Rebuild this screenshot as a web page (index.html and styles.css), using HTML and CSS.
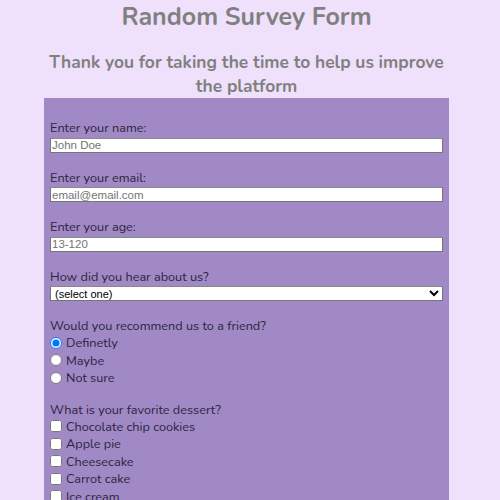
FILE: index.html
```html
<!DOCTYPE html>
<html>
<head>
<meta charset="utf-8">
<link rel="stylesheet" href="styles.css">
</head>
<body>
<h1 class="title">Random Survey Form</h1>
<h2 class="subtitle">Thank you for taking the time to help us improve the platform</h2>
<form class="survey">
  <div class="group">
    <label class="lbl" for="name">Enter your name:</label>
    <input class="field" id="name" type="text" placeholder="John Doe">
  </div>
  <div class="group">
    <label class="lbl" for="email">Enter your email:</label>
    <input class="field" id="email" type="email" placeholder="email@email.com">
  </div>
  <div class="group">
    <label class="lbl" for="age">Enter your age:</label>
    <input class="field" id="age" type="text" placeholder="13-120">
  </div>
  <div class="group">
    <label class="lbl" for="hear">How did you hear about us?</label>
    <select class="field select" id="hear"><option>(select one)</option></select>
  </div>
  <div class="group">
    <p class="lbl">Would you recommend us to a friend?</p>
    <label class="opt"><input class="box" type="radio" name="rec" checked> Definetly</label>
    <label class="opt"><input class="box" type="radio" name="rec"> Maybe</label>
    <label class="opt"><input class="box" type="radio" name="rec"> Not sure</label>
  </div>
  <div class="group">
    <p class="lbl">What is your favorite dessert?</p>
    <label class="opt"><input class="box" type="checkbox"> Chocolate chip cookies</label>
    <label class="opt"><input class="box" type="checkbox"> Apple pie</label>
    <label class="opt"><input class="box" type="checkbox"> Cheesecake</label>
    <label class="opt"><input class="box" type="checkbox"> Carrot cake</label>
    <label class="opt"><input class="box" type="checkbox"> Ice cream</label>
  </div>
</form>
</body>
</html>
```
FILE: styles.css
```css
html, body {
  background: #efe1fc;
}
body {
  margin: 0 15px 0 8px;
  font-family: "Nunito", Lato, "Noto Sans", sans-serif;
  color: #2c2540;
}
.title {
  margin: 0;
  padding-top: 2px;
  text-align: center;
  font-size: 25px;
  line-height: 30px;
  font-weight: 700;
  color: #808080;
}
.subtitle {
  margin: 18px auto 0;
  width: 405px;
  text-align: center;
  font-size: 17.4px;
  line-height: 24px;
  font-weight: 700;
  color: #808080;
}
.survey {
  width: 393px;
  margin: 0 auto;
  padding: 7px 6px 20px;
  background: #a089c4;
}
.group {
  margin-top: 14px;
  display: flex;
  flex-direction: column;
  align-items: flex-start;
}
.lbl {
  margin: 0;
  font-size: 12.7px;
  line-height: 17px;
}
.field {
  box-sizing: border-box;
  width: 393px;
  height: 15px;
  margin: 1.5px 0 2px;
  padding: 0 1px;
  border: 1px solid #767676;
  border-top-color: #888;
  background: #fff;
  font-family: Arial, "Liberation Sans", sans-serif;
  font-size: 11.5px;
  color: #000;
}
.field::placeholder {
  color: #757575;
}
.select {
  padding: 0;
  border-radius: 0;
  font-size: 11px;
}
.opt {
  display: flex;
  align-items: center;
  font-size: 12.7px;
  line-height: 17.5px;
}
.box {
  margin: 0 4px 0 0;
  width: 12px;
  height: 12px;
}
```
